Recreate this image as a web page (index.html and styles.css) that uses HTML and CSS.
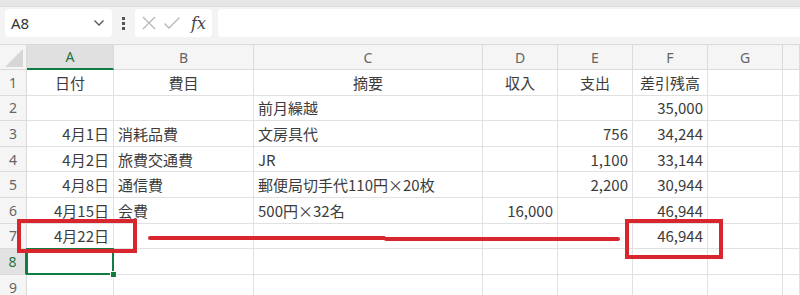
FILE: index.html
```html
<!DOCTYPE html>
<html lang="ja">
<head>
    <meta charset="UTF-8">
    <title>出納帳</title>
    <link rel="stylesheet" href="styles.css">
</head>
<body>
    <div class="topstrip"></div>

    <div class="formula-bar">
        <div class="namebox">
            <span>A8</span>
            <svg class="chev" width="12" height="8" viewBox="0 0 12 8"><path d="M1.5 1.5 L6 6 L10.5 1.5" fill="none" stroke="#555" stroke-width="1.3"/></svg>
        </div>
        <div class="dots"><i></i><i></i><i></i></div>
        <div class="fxbox">
            <svg width="16" height="16" viewBox="0 0 16 16"><path d="M2 2 L14 14 M14 2 L2 14" stroke="#b8b8b8" stroke-width="1.4"/></svg>
            <svg width="18" height="16" viewBox="0 0 18 16"><path d="M1.5 8.5 L6 13 L16.5 2.5" fill="none" stroke="#b8b8b8" stroke-width="1.4"/></svg>
            <span class="fx">fx</span>
        </div>
        <div class="input"></div>
    </div>

    <div class="sheet">
        <div class="row head">
            <div class="corner"><svg width="20" height="20" viewBox="0 0 20 20"><polygon points="19,1 19,19 1,19" fill="#d6d6d6"/></svg></div>
            <div class="col sel">A</div><div class="col">B</div><div class="col">C</div><div class="col">D</div>
            <div class="col">E</div><div class="col">F</div><div class="col">G</div><div class="col"></div>
        </div>

        <div class="row">
            <div class="num">1</div>
            <div class="c mid">日付</div><div class="c mid">費目</div><div class="c mid">摘要</div><div class="c mid">収入</div>
            <div class="c mid">支出</div><div class="c mid">差引残高</div><div class="c"></div><div class="c"></div>
        </div>
        <div class="row">
            <div class="num">2</div>
            <div class="c"></div><div class="c"></div><div class="c">前月繰越</div><div class="c"></div>
            <div class="c"></div><div class="c r">35,000</div><div class="c"></div><div class="c"></div>
        </div>
        <div class="row">
            <div class="num">3</div>
            <div class="c r">4月1日</div><div class="c">消耗品費</div><div class="c">文房具代</div><div class="c"></div>
            <div class="c r">756</div><div class="c r">34,244</div><div class="c"></div><div class="c"></div>
        </div>
        <div class="row">
            <div class="num">4</div>
            <div class="c r">4月2日</div><div class="c">旅費交通費</div><div class="c">JR</div><div class="c"></div>
            <div class="c r">1,100</div><div class="c r">33,144</div><div class="c"></div><div class="c"></div>
        </div>
        <div class="row">
            <div class="num">5</div>
            <div class="c r">4月8日</div><div class="c">通信費</div><div class="c">郵便局切手代110円×20枚</div><div class="c"></div>
            <div class="c r">2,200</div><div class="c r">30,944</div><div class="c"></div><div class="c"></div>
        </div>
        <div class="row">
            <div class="num">6</div>
            <div class="c r">4月15日</div><div class="c">会費</div><div class="c">500円×32名</div><div class="c r">16,000</div>
            <div class="c"></div><div class="c r">46,944</div><div class="c"></div><div class="c"></div>
        </div>
        <div class="row">
            <div class="num">7</div>
            <div class="c r">4月22日</div><div class="c"></div><div class="c"></div><div class="c"></div>
            <div class="c"></div><div class="c r">46,944</div><div class="c"></div><div class="c"></div>
        </div>
        <div class="row">
            <div class="num sel">8</div>
            <div class="c active"></div><div class="c"></div><div class="c"></div><div class="c"></div>
            <div class="c"></div><div class="c"></div><div class="c"></div><div class="c"></div>
        </div>
        <div class="row">
            <div class="num">9</div>
            <div class="c"></div><div class="c"></div><div class="c"></div><div class="c"></div>
            <div class="c"></div><div class="c"></div><div class="c"></div><div class="c"></div>
        </div>

        <!-- red annotation marks over the grid -->
        <div class="mark box-date"></div>
        <div class="mark box-total"></div>
        <div class="mark line line-a"></div>
        <div class="mark line line-b"></div>
    </div>
</body>
</html>
```

FILE: styles.css
```css
body { margin: 0; background: #f3f3f3; font-family: "Noto Sans CJK JP", "Noto Sans", sans-serif; overflow: hidden; }

.topstrip { height: 6px; background: #e6e6e6; border-bottom: 1px solid #dedede; }

.formula-bar { display: flex; align-items: center; height: 28px; padding: 2px 0 7px 5px; }
.namebox { width: 107px; height: 28px; box-sizing: border-box; background: #fff; border-radius: 4px; display: flex; align-items: center; justify-content: space-between; padding: 0 7px 0 6px; font-family: "Noto Sans", sans-serif; font-size: 15px; color: #333; }
.dots { width: 23px; display: flex; flex-direction: column; align-items: center; gap: 2px; }
.dots i { display: block; width: 3px; height: 3px; background: #555; }
.fxbox { width: 77px; height: 28px; box-sizing: border-box; background: #fff; border-radius: 4px; display: flex; align-items: center; gap: 6px; padding-left: 6px; }
.fx { font-family: "DejaVu Serif", "Liberation Serif", serif; font-style: italic; font-size: 16px; color: #444; margin-left: 4px; }
.input { flex: 1; height: 28px; margin-left: 6px; background: #fff; border-radius: 4px 0 0 4px; }

.sheet { position: relative; background: #fff; border-top: 1px solid #dadada; }
.row { display: grid; grid-template-columns: 27px 87px 140px 229px 75px 75px 75px 75px 1fr; height: 25.6px; }
.row > div { box-sizing: border-box; border-right: 1px solid #e1e1e1; border-bottom: 1px solid #e1e1e1; white-space: nowrap; }

.head { height: 25px; background: #f5f5f5; }
.head > div { border-color: #dadada; }
.corner { display: flex; align-items: flex-end; justify-content: flex-end; padding: 0 2px 1px 0; }
.col { display: flex; align-items: center; justify-content: center; font-family: "Noto Sans", sans-serif; font-size: 14px; color: #666; }
.col.sel { background: #e0e0e0; color: #217346; border-bottom: 2px solid #107c41 !important; }

.num { background: #f5f5f5; display: flex; align-items: center; justify-content: center; font-family: "Noto Sans", sans-serif; font-size: 14px; color: #666; border-color: #dadada !important; }
.num.sel { background: #e2e2e2; color: #217346; border-right: 2px solid #107c41 !important; }

.c { display: flex; align-items: center; padding: 0 4px; font-size: 15px; color: #3c3c3c; overflow: visible; }
.c.mid { justify-content: center; }
.c.r { justify-content: flex-end; }
.c.active { position: relative; }
.c.active::after { content: ""; position: absolute; left: -1px; top: -1px; right: -1px; bottom: -1px; border: 2px solid #107c41; }
.c.active::before { content: ""; position: absolute; right: -4px; bottom: -4px; width: 5px; height: 5px; background: #107c41; border: 1px solid #fff; z-index: 1; }

.mark { position: absolute; border: 4px solid #d9252e; box-sizing: border-box; }
.box-date { left: 17px; top: 174px; width: 120px; height: 34px; }
.box-total { left: 625px; top: 174px; width: 98px; height: 40px; }
.line { border: none; background: #d9252e; height: 4px; border-radius: 2px; }
.line-a { left: 148px; top: 190.5px; width: 238px; }
.line-b { left: 384px; top: 192px; width: 236px; }
```
